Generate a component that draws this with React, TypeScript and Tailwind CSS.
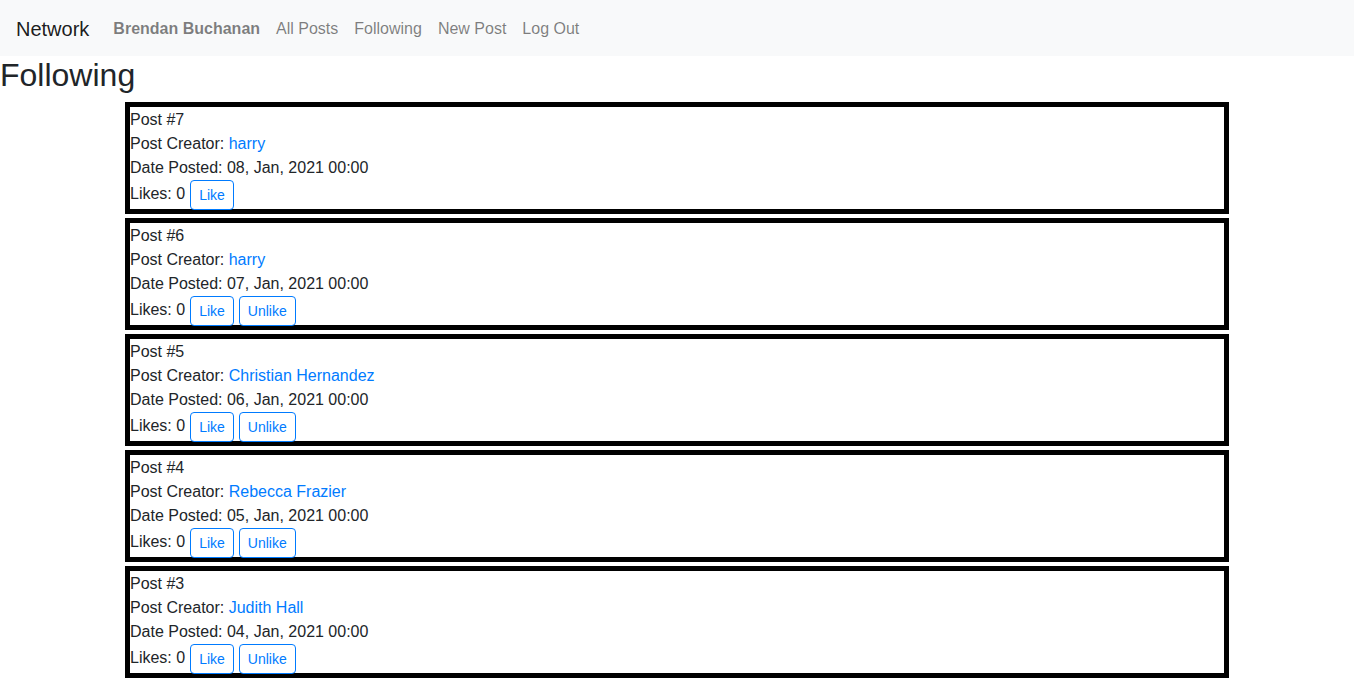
const posts = [
  { id: 7, creator: "harry", date: "08, Jan, 2021 00:00", likes: 0, unlike: false },
  { id: 6, creator: "harry", date: "07, Jan, 2021 00:00", likes: 0, unlike: true },
  { id: 5, creator: "Christian Hernandez", date: "06, Jan, 2021 00:00", likes: 0, unlike: true },
  { id: 4, creator: "Rebecca Frazier", date: "05, Jan, 2021 00:00", likes: 0, unlike: true },
  { id: 3, creator: "Judith Hall", date: "04, Jan, 2021 00:00", likes: 0, unlike: true },
];

const App = () => {
  return (
    <div
      className="w-[1354px] bg-white text-[#212529] text-base leading-6"
      style={{ fontFamily: '"Liberation Sans", Arial, sans-serif' }}
    >
      <nav className="flex items-center h-[56px] px-4 pt-[2px] bg-[#f8f9fa]">
        <a className="text-xl leading-[30px] py-[5px] mr-4 text-black/90">Network</a>
        <a className="px-2 font-bold text-black/50">Brendan Buchanan</a>
        <a className="px-2 text-black/50">All Posts</a>
        <a className="px-2 text-black/50">Following</a>
        <a className="px-2 text-black/50">New Post</a>
        <a className="px-2 text-black/50">Log Out</a>
      </nav>

      <h2 className="text-[32px] leading-[38.4px] mb-2">Following</h2>

      <div className="w-[1104px] mx-auto flex flex-col gap-1">
        {posts.map((p) => (
          <div key={p.id} className="border-[5px] border-black pt-[1px]">
            <div>Post #{p.id}</div>
            <div>
              Post Creator: <a className="text-[#007bff]">{p.creator}</a>
            </div>
            <div>Date Posted: {p.date}</div>
            <div className="flex items-center h-[29px]">
              <span className="mb-[1px]">Likes: {p.likes}</span>
              <button className="ml-[5px] h-[30px] px-2 text-sm text-[#007bff] border border-[#007bff] rounded">
                Like
              </button>
              {p.unlike && (
                <button className="ml-[5px] h-[30px] px-2 text-sm text-[#007bff] border border-[#007bff] rounded">
                  Unlike
                </button>
              )}
            </div>
          </div>
        ))}
      </div>
    </div>
  );
};

export default App;
